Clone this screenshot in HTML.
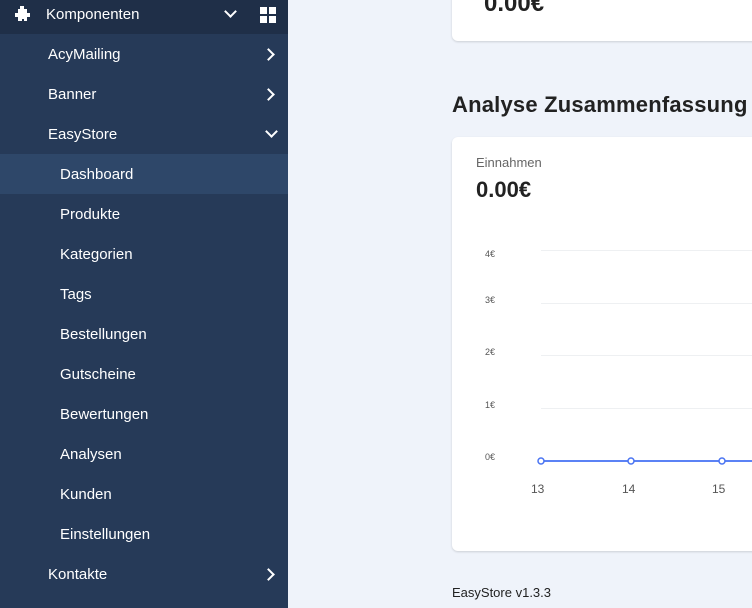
<!DOCTYPE html>
<html style="overflow:hidden"><head><meta charset="utf-8"><style>
*{margin:0;padding:0;box-sizing:border-box}
body{width:752px;height:608px;overflow:hidden;background:#eff3fa;font-family:"Liberation Sans",Roboto,sans-serif;position:relative}
.sb{position:absolute;left:0;top:0;width:288px;height:608px;background:#263a58}
.top{position:absolute;left:0;top:0;width:288px;height:34px;background:#1f2f48}
.it{position:absolute;left:0;width:288px;height:40px;color:#fff;font-size:15px;line-height:42px}
.it.a{background:#2e4769}
.chev{position:absolute;right:15px;top:16px;width:9px;height:9px;border-right:2px solid #fff;border-top:2px solid #fff;transform:rotate(45deg)}
.down{position:absolute;right:12px;top:13px;width:9px;height:9px;border-right:2px solid #fff;border-bottom:2px solid #fff;transform:rotate(45deg)}
.card{position:absolute;background:#fff;border-radius:6px;box-shadow:0 1px 2px rgba(0,0,0,.15)}
.yl{position:absolute;left:485px;font-size:9px;color:#555}
.gl{position:absolute;left:541px;width:211px;height:1px;background:#eef0f2}
.xl{position:absolute;font-size:12px;color:#555}
</style></head><body>
<div class="sb"></div>
<div class="top"></div>
<svg style="position:absolute;left:13px;top:5px" width="20" height="20" viewBox="0 0 20 20"><path fill="#fff" d="M7 1h4v3h3v4h3v4h-3v4h-3v-2h-2v2H5v-4H2V8h3V4h2z"/></svg>
<div style="position:absolute;left:46px;top:6px;color:#fff;font-size:15px">Komponenten</div>
<div style="position:absolute;left:226px;top:7px;width:9px;height:9px;border-right:2px solid #fff;border-bottom:2px solid #fff;transform:rotate(45deg)"></div>
<div style="position:absolute;left:260px;top:7px;width:7px;height:7px;background:#fff"></div>
<div style="position:absolute;left:269px;top:7px;width:7px;height:7px;background:#fff"></div>
<div style="position:absolute;left:260px;top:16px;width:7px;height:7px;background:#fff"></div>
<div style="position:absolute;left:269px;top:16px;width:7px;height:7px;background:#fff"></div>

<div class="it" style="top:34px;padding-left:48px">AcyMailing<span class="chev"></span></div>
<div class="it" style="top:74px;padding-left:48px">Banner<span class="chev"></span></div>
<div class="it" style="top:114px;padding-left:48px">EasyStore<span class="down"></span></div>
<div class="it a" style="top:154px;padding-left:60px">Dashboard</div>
<div class="it" style="top:194px;padding-left:60px">Produkte</div>
<div class="it" style="top:234px;padding-left:60px">Kategorien</div>
<div class="it" style="top:274px;padding-left:60px">Tags</div>
<div class="it" style="top:314px;padding-left:60px">Bestellungen</div>
<div class="it" style="top:354px;padding-left:60px">Gutscheine</div>
<div class="it" style="top:394px;padding-left:60px">Bewertungen</div>
<div class="it" style="top:434px;padding-left:60px">Analysen</div>
<div class="it" style="top:474px;padding-left:60px">Kunden</div>
<div class="it" style="top:514px;padding-left:60px">Einstellungen</div>
<div class="it" style="top:554px;padding-left:48px">Kontakte<span class="chev"></span></div>

<div class="card" style="left:452px;top:-10px;width:320px;height:51px"></div>
<div style="position:absolute;left:484px;top:-10px;font-size:24px;font-weight:bold;color:#222">0.00€</div>

<div style="position:absolute;left:452px;top:92px;font-size:22px;font-weight:bold;color:#222;letter-spacing:0.2px">Analyse Zusammenfassung</div>

<div class="card" style="left:452px;top:137px;width:320px;height:414px"></div>
<div style="position:absolute;left:476px;top:155px;font-size:13px;color:#666">Einnahmen</div>
<div style="position:absolute;left:476px;top:177px;font-size:22px;font-weight:bold;color:#222">0.00€</div>

<div class="yl" style="top:249px">4€</div>
<div class="yl" style="top:295px">3€</div>
<div class="yl" style="top:347px">2€</div>
<div class="yl" style="top:400px">1€</div>
<div class="yl" style="top:452px">0€</div>
<div class="gl" style="top:250px"></div>
<div class="gl" style="top:303px"></div>
<div class="gl" style="top:355px"></div>
<div class="gl" style="top:408px"></div>
<svg style="position:absolute;left:530px;top:452px" width="222" height="18"><line x1="11" y1="9" x2="222" y2="9" stroke="#5b82f5" stroke-width="2"/><circle cx="11" cy="9" r="3" fill="#fff" stroke="#4a74f2" stroke-width="1.5"/><circle cx="101" cy="9" r="3" fill="#fff" stroke="#4a74f2" stroke-width="1.5"/><circle cx="192" cy="9" r="3" fill="#fff" stroke="#4a74f2" stroke-width="1.5"/></svg>
<div class="xl" style="left:531px;top:482px">13</div>
<div class="xl" style="left:622px;top:482px">14</div>
<div class="xl" style="left:712px;top:482px">15</div>

<div style="position:absolute;left:452px;top:585px;font-size:13px;color:#222">EasyStore v1.3.3</div>
</body></html>
